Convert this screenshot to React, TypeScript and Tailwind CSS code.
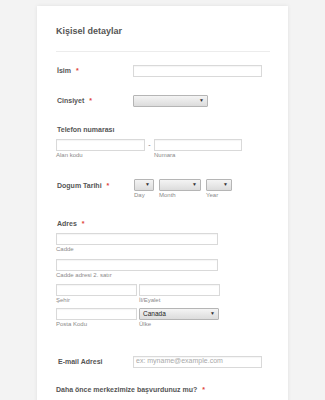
import React from 'react';

const font = { fontFamily: '"Liberation Sans", Arial, sans-serif' };

function Input({ w, placeholder }: { w: number; placeholder?: string }) {
  return (
    <div
      className="h-[12px] border border-[#d9d9d9] bg-white shadow-[inset_0_1px_1px_rgba(0,0,0,0.04)] flex items-center px-[2px] text-[7px] text-[#a9a9a9]"
      style={{ width: w }}
    >
      {placeholder}
    </div>
  );
}

function Select({ w, value }: { w: number; value?: string }) {
  return (
    <div
      className="h-[12px] border border-[#b5b5b5] rounded-[1px] bg-gradient-to-b from-[#f4f4f4] to-[#dcdcdc] flex items-center justify-between pl-[3px] pr-[3px] text-[6.5px] text-[#222]"
      style={{ width: w }}
    >
      <span>{value}</span>
      <span className="text-[5px] text-[#333]">▼</span>
    </div>
  );
}

function Sub({ children }: { children: React.ReactNode }) {
  return <div className="text-[6px] leading-[7px] text-[#8a8a8a] mt-[1px]">{children}</div>;
}

function Label({ text, req }: { text: string; req?: boolean }) {
  return (
    <div className="text-[7px] font-bold text-[#555] leading-[10px]">
      {text}
      {req && <span className="text-[#e0443a] ml-[5px]">*</span>}
    </div>
  );
}

export default function App() {
  return (
    <div className="w-[325px] h-[400px] overflow-hidden bg-[#f3f3f3] pt-[6px]" style={font}>
      <div className="ml-[37px] w-[251px] h-[420px] bg-white shadow-[0_0_4px_rgba(0,0,0,0.08)] pl-[19px] pr-[18px]">
        <div className="pt-[19px] text-[9px] font-bold text-[#555] leading-[12px]">Kişisel detaylar</div>
        <div className="mt-[14px] h-px bg-[#ececec]" />

        {/* İsim */}
        <div className="mt-[12px] flex items-center h-[13px]">
          <div className="w-[77px] pl-[1px]"><Label text="İsim" req /></div>
          <Input w={129} />
        </div>

        {/* Cinsiyet */}
        <div className="mt-[17px] flex items-center h-[13px]">
          <div className="w-[77px] pl-[1px] pt-[1px]"><Label text="Cinsiyet" req /></div>
          <Select w={75} />
        </div>

        {/* Telefon */}
        <div className="mt-[18px] pl-[1px]"><Label text="Telefon numarası" /></div>
        <div className="mt-[4px] flex">
          <div>
            <Input w={89} />
            <Sub>Alan kodu</Sub>
          </div>
          <div className="w-[9px] text-center text-[7px] text-[#777] leading-[12px]">-</div>
          <div>
            <Input w={88} />
            <Sub>Numara</Sub>
          </div>
        </div>

        {/* Dogum */}
        <div className="mt-[20px] flex">
          <div className="w-[78px] pl-[1px] pt-[2px]"><Label text="Dogum Tarihi" req /></div>
          <div className="flex gap-[5px]">
            <div>
              <Select w={20} />
              <Sub>Day</Sub>
            </div>
            <div>
              <Select w={42} />
              <Sub>Month</Sub>
            </div>
            <div>
              <Select w={26} />
              <Sub>Year</Sub>
            </div>
          </div>
        </div>

        {/* Adres */}
        <div className="mt-[20px] pl-[1px]"><Label text="Adres" req /></div>
        <div className="mt-[4px]">
          <Input w={162} />
          <Sub>Cadde</Sub>
        </div>
        <div className="mt-[6px]">
          <Input w={162} />
          <Sub>Cadde adresi 2. satır</Sub>
        </div>
        <div className="mt-[5px] flex gap-[2px]">
          <div>
            <Input w={81} />
            <Sub>Şehir</Sub>
          </div>
          <div>
            <Input w={81} />
            <Sub>İl/Eyalet</Sub>
          </div>
        </div>
        <div className="mt-[4px] flex gap-[2px]">
          <div>
            <Input w={81} />
            <Sub>Posta Kodu</Sub>
          </div>
          <div>
            <Select w={80} value="Canada" />
            <Sub>Ülke</Sub>
          </div>
        </div>

        {/* Email */}
        <div className="mt-[27px] flex items-center h-[13px]">
          <div className="w-[77px] pl-[2px]"><Label text="E-mail Adresi" /></div>
          <Input w={129} placeholder="ex: myname@example.com" />
        </div>

        {/* Question */}
        <div className="mt-[17px]"><Label text="Daha önce merkezimize başvurdunuz mu?" req /></div>
      </div>
    </div>
  );
}
